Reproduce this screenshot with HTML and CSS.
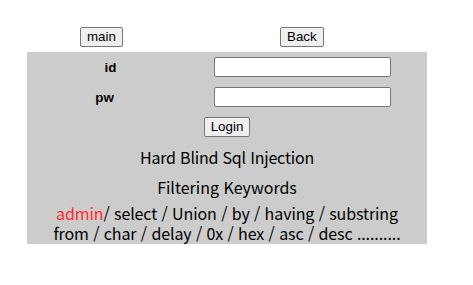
FILE: index.html
```html
<!DOCTYPE html>
<html lang="ko">

<head>
    <meta charset="UTF-8" />
    <title>Hard Blind Sql Injection</title>
    <link rel="stylesheet" href="styles.css">
</head>

<body>
    <div class="nav">
        <div class="nav-cell"><button class="btn">main</button></div>
        <div class="nav-cell"><button class="btn">Back</button></div>
    </div>
    <div class="box">
        <form class="login-form">
            <label class="field-label" for="uid">id</label>
            <input class="field-input" type="text" id="uid" name="id">
            <label class="field-label pw-label" for="upw">pw</label>
            <input class="field-input" type="password" id="upw" name="pw">
        </form>
        <div class="login-row"><button class="btn">Login</button></div>
        <p class="title">Hard Blind Sql Injection</p>
        <p class="subtitle">Filtering Keywords</p>
        <p class="keywords"><span class="hl">admin</span>/ select / Union / by / having / substring<br>from / char / delay / 0x / hex / asc / desc ..........</p>
    </div>
</body>

</html>
```

FILE: styles.css
```css
body {
    margin: 0;
    padding: 27px 0 0 27px;
    font-family: "Noto Sans CJK KR", "Noto Sans", sans-serif;
    color: #000;
}

.nav {
    display: flex;
    width: 400px;
    height: 25px;
}

.nav-cell {
    display: flex;
    align-items: flex-start;
    width: 200px;
    padding-left: 53px;
    box-sizing: border-box;
}

.btn {
    font-family: "Liberation Sans", Arial, sans-serif;
    font-size: 13.33px;
    height: 20px;
    padding: 0 6px;
    background: #efefef;
    border: 1px solid #767676;
    border-radius: 2px;
    color: #000;
    line-height: 18px;
}

.box {
    width: 400px;
    background: #cccccc;
    padding: 5px 0 1px;
    box-sizing: border-box;
}

.login-form {
    display: grid;
    grid-template-columns: 167px 177px;
    column-gap: 20px;
    row-gap: 10px;
    align-items: center;
    margin: 0;
}

.field-label {
    text-align: center;
    font-family: "Liberation Sans", Arial, sans-serif;
    font-size: 13.33px;
    font-weight: bold;
}

.pw-label {
    padding-right: 12px;
}

.field-input {
    height: 20px;
    box-sizing: border-box;
    border: 1px solid #767676;
    border-radius: 2px;
    background: #fff;
    padding: 1px 2px;
}

.login-row {
    display: flex;
    justify-content: center;
    align-items: flex-start;
    margin-top: 10px;
    height: 20px;
}

.title,
.subtitle,
.keywords {
    margin: 0;
    text-align: center;
    font-size: 16px;
    line-height: 20px;
}

.title {
    margin-top: 10px;
    letter-spacing: -0.2px;
}

.subtitle {
    margin-top: 10px;
}

.keywords {
    margin-top: 6px;
    letter-spacing: -0.1px;
}

.hl {
    color: #ff2a2a;
}
```
